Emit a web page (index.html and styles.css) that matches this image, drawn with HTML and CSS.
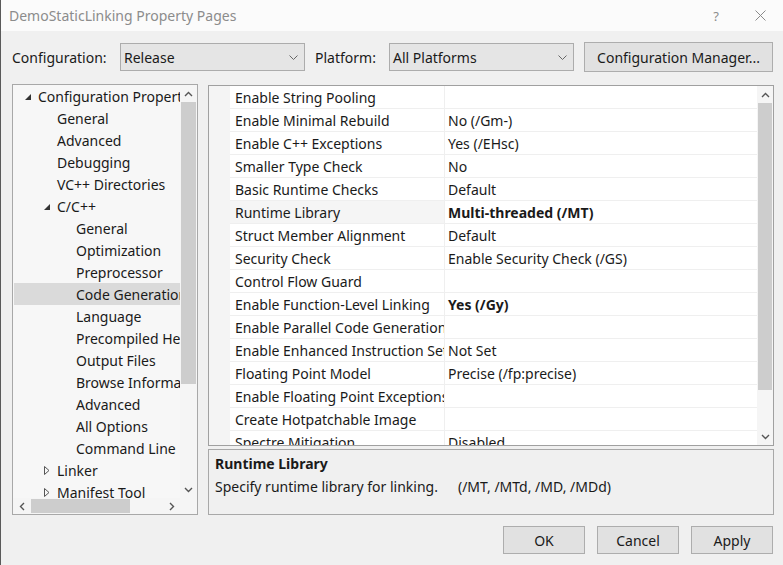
FILE: index.html
```html
<!DOCTYPE html>
<html>
<head>
<meta charset="utf-8">
<link rel="stylesheet" href="styles.css">
</head>
<body>
<div class="window">
  <div class="titlebar">
    <span class="title">DemoStaticLinking Property Pages</span>
    <span class="help">?</span>
    <span class="close"><svg width="11" height="11" viewBox="0 0 11 11"><path d="M0.5 0.5 L10.5 10.5 M10.5 0.5 L0.5 10.5" stroke="#8a8a8a" stroke-width="1" fill="none"/></svg></span>
  </div>

  <div class="toolbar">
    <span class="lbl lbl-config">Configuration:</span>
    <div class="combo"><span>Release</span><svg width="9" height="5" viewBox="0 0 9 5"><path d="M0.5 0.5 L4.5 4.5 L8.5 0.5" fill="none" stroke="#666"/></svg></div>
    <span class="lbl lbl-platform">Platform:</span>
    <div class="combo"><span>All Platforms</span><svg width="9" height="5" viewBox="0 0 9 5"><path d="M0.5 0.5 L4.5 4.5 L8.5 0.5" fill="none" stroke="#666"/></svg></div>
    <button class="btn btn-mgr">Configuration Manager...</button>
  </div>

  <div class="main">
    <div class="tree">
      <div class="tree-content">
        <div class="ti l1"><svg class="exp" width="6" height="6" viewBox="0 0 6 6"><path d="M6 0 L6 6 L0 6 Z" fill="#333"/></svg>Configuration Properties</div>
        <div class="ti l2">General</div>
        <div class="ti l2">Advanced</div>
        <div class="ti l2">Debugging</div>
        <div class="ti l2">VC++ Directories</div>
        <div class="ti l2"><svg class="exp" width="6" height="6" viewBox="0 0 6 6"><path d="M6 0 L6 6 L0 6 Z" fill="#333"/></svg>C/C++</div>
        <div class="ti l3">General</div>
        <div class="ti l3">Optimization</div>
        <div class="ti l3">Preprocessor</div>
        <div class="ti l3 sel">Code Generation</div>
        <div class="ti l3">Language</div>
        <div class="ti l3">Precompiled Headers</div>
        <div class="ti l3">Output Files</div>
        <div class="ti l3">Browse Information</div>
        <div class="ti l3">Advanced</div>
        <div class="ti l3">All Options</div>
        <div class="ti l3">Command Line</div>
        <div class="ti l2"><svg class="col" width="6" height="9" viewBox="0 0 6 9"><path d="M0.5 0.5 L5 4.5 L0.5 8.5 Z" fill="none" stroke="#555"/></svg>Linker</div>
        <div class="ti l2"><svg class="col" width="6" height="9" viewBox="0 0 6 9"><path d="M0.5 0.5 L5 4.5 L0.5 8.5 Z" fill="none" stroke="#555"/></svg>Manifest Tool</div>
      </div>
      <div class="vscroll tree-v">
        <div class="arrow"><svg width="9" height="6" viewBox="0 0 9 6"><path d="M1 5 L4.5 1.5 L8 5" fill="none" stroke="#555" stroke-width="1.4"/></svg></div>
        <div class="track"><div class="thumb tree-vthumb"></div></div>
        <div class="arrow"><svg width="9" height="6" viewBox="0 0 9 6"><path d="M1 1 L4.5 4.5 L8 1" fill="none" stroke="#555" stroke-width="1.4"/></svg></div>
      </div>
      <div class="hscroll">
        <div class="harrow"><svg width="6" height="9" viewBox="0 0 6 9"><path d="M5 1 L1.5 4.5 L5 8" fill="none" stroke="#555" stroke-width="1.4"/></svg></div>
        <div class="htrack"><div class="hthumb"></div></div>
        <div class="harrow"><svg width="6" height="9" viewBox="0 0 6 9"><path d="M1 1 L4.5 4.5 L1 8" fill="none" stroke="#555" stroke-width="1.4"/></svg></div>
      </div>
      <div class="corner"></div>
    </div>

    <div class="right">
      <div class="grid">
        <div class="gutter"></div>
        <div class="rows">
          <div class="row"><div class="nm">Enable String Pooling</div><div class="vl"></div></div>
          <div class="row"><div class="nm">Enable Minimal Rebuild</div><div class="vl">No (/Gm-)</div></div>
          <div class="row"><div class="nm">Enable C++ Exceptions</div><div class="vl">Yes (/EHsc)</div></div>
          <div class="row"><div class="nm">Smaller Type Check</div><div class="vl">No</div></div>
          <div class="row"><div class="nm">Basic Runtime Checks</div><div class="vl">Default</div></div>
          <div class="row hl"><div class="nm">Runtime Library</div><div class="vl b">Multi-threaded (/MT)</div></div>
          <div class="row"><div class="nm">Struct Member Alignment</div><div class="vl">Default</div></div>
          <div class="row"><div class="nm">Security Check</div><div class="vl">Enable Security Check (/GS)</div></div>
          <div class="row"><div class="nm">Control Flow Guard</div><div class="vl"></div></div>
          <div class="row"><div class="nm">Enable Function-Level Linking</div><div class="vl b">Yes (/Gy)</div></div>
          <div class="row"><div class="nm">Enable Parallel Code Generation</div><div class="vl"></div></div>
          <div class="row"><div class="nm">Enable Enhanced Instruction Set</div><div class="vl">Not Set</div></div>
          <div class="row"><div class="nm">Floating Point Model</div><div class="vl">Precise (/fp:precise)</div></div>
          <div class="row"><div class="nm">Enable Floating Point Exceptions</div><div class="vl"></div></div>
          <div class="row"><div class="nm">Create Hotpatchable Image</div><div class="vl"></div></div>
          <div class="row"><div class="nm">Spectre Mitigation</div><div class="vl">Disabled</div></div>
        </div>
        <div class="vscroll grid-v">
          <div class="arrow"><svg width="9" height="6" viewBox="0 0 9 6"><path d="M1 5 L4.5 1.5 L8 5" fill="none" stroke="#555" stroke-width="1.4"/></svg></div>
          <div class="track"><div class="thumb grid-vthumb"></div></div>
          <div class="arrow"><svg width="9" height="6" viewBox="0 0 9 6"><path d="M1 1 L4.5 4.5 L8 1" fill="none" stroke="#555" stroke-width="1.4"/></svg></div>
        </div>
      </div>
      <div class="desc">
        <div class="desc-title">Runtime Library</div>
        <div class="desc-text"><span>Specify runtime library for linking.</span><span class="desc-opts">(/MT, /MTd, /MD, /MDd)</span></div>
      </div>
    </div>
  </div>

  <div class="footer">
    <button class="btn btn-foot">OK</button>
    <button class="btn btn-foot">Cancel</button>
    <button class="btn btn-foot">Apply</button>
  </div>
</div>
</body>
</html>
```

FILE: styles.css
```css
* { box-sizing: border-box; }
html, body { margin: 0; padding: 0; }
body {
  width: 783px;
  height: 565px;
  overflow: hidden;
  font-family: "Noto Sans", "Open Sans", sans-serif;
  font-size: 14px;
  color: #1a1a1a;
  background: #f0f0f0;
}
.window {
  width: 783px;
  height: 565px;
  display: flex;
  flex-direction: column;
  background: #f0f0f0;
  border-left: 1px solid #5a5a5a;
}
.titlebar {
  height: 31px;
  background: #fbfbfb;
  display: flex;
  align-items: center;
  padding-left: 8px;
  flex: none;
}
.title {
  color: #8c8c8c;
  font-size: 14px;
  flex: 1;
}
.help {
  color: #8c8c8c;
  font-size: 13px;
  margin-right: 36px;
}
.close {
  display: flex;
  margin-right: 17px;
}
.toolbar {
  display: flex;
  align-items: center;
  height: 30px;
  margin-top: 11px;
  padding-left: 11px;
  flex: none;
}
.lbl { white-space: nowrap; }
.lbl-config { width: 108px; }
.lbl-platform { width: 74px; margin-left: 10px; }
.combo {
  width: 185px;
  height: 28px;
  background: #e5e5e5;
  border: 1px solid #acacac;
  display: flex;
  align-items: center;
  justify-content: space-between;
  padding: 0 6px 0 3px;
}
.btn {
  font-family: inherit;
  font-size: 14px;
  color: #1a1a1a;
  background: #e1e1e1;
  border: 1px solid #adadad;
  padding: 0;
  margin: 0;
}
.btn-mgr {
  width: 189px;
  height: 30px;
  margin-left: 10px;
}
.main {
  display: flex;
  height: 431px;
  margin-top: 12px;
  padding-left: 11px;
  flex: none;
}
.tree {
  width: 186px;
  height: 431px;
  border: 1px solid #a8a8a8;
  background: #f7f7f7;
  display: grid;
  grid-template-columns: 1fr 17px;
  grid-template-rows: 1fr 16px;
  overflow: hidden;
}
.tree-content {
  overflow: hidden;
  padding: 0 0 0 1px;
}
.ti {
  height: 22px;
  display: flex;
  align-items: center;
  white-space: nowrap;
  position: relative;
}
.ti.l1 { padding-left: 24px; }
.ti.l2 { padding-left: 43px; }
.ti.l3 { padding-left: 62px; }
.ti.sel { background: #dadada; }
.ti svg {
  position: absolute;
}
.ti.l1 svg.exp { left: 11px; top: 9px; }
.ti.l2 svg.exp { left: 30px; top: 9px; }
.ti.l2 svg.col { left: 30px; top: 7px; }
.vscroll {
  display: flex;
  flex-direction: column;
  background: #f5f5f5;
}
.arrow {
  height: 17px;
  display: flex;
  align-items: center;
  justify-content: center;
  flex: none;
}
.track {
  flex: 1;
  position: relative;
}
.thumb {
  position: absolute;
  left: 1px;
  right: 1px;
  background: #cdcdcd;
}
.tree-vthumb { top: 0; height: 282px; }
.grid-vthumb { top: 0; height: 287px; }
.hscroll {
  display: flex;
  background: #f5f5f5;
}
.harrow {
  width: 17px;
  display: flex;
  align-items: center;
  justify-content: center;
  flex: none;
}
.htrack {
  flex: 1;
  position: relative;
}
.hthumb {
  position: absolute;
  left: 1px;
  width: 99px;
  top: 1px;
  bottom: 1px;
  background: #cdcdcd;
}
.corner { background: #f5f5f5; }
.right {
  width: 566px;
  margin-left: 10px;
  padding-top: 1px;
  display: flex;
  flex-direction: column;
  gap: 3px;
}
.grid {
  height: 361px;
  border: 1px solid #a0a0a0;
  background: #fff;
  display: flex;
  overflow: hidden;
}
.gutter {
  width: 21px;
  background: #f4f4f4;
  flex: none;
}
.rows {
  flex: 1;
  overflow: hidden;
}
.row {
  display: flex;
  height: 23px;
  border-bottom: 1px solid #efefef;
}
.nm {
  width: 215px;
  flex: none;
  padding-left: 5px;
  padding-top: 1px;
  border-right: 1px solid #efefef;
  white-space: nowrap;
  overflow: hidden;
  line-height: 22px;
}
.vl {
  flex: 1;
  padding-left: 3px;
  padding-top: 1px;
  white-space: nowrap;
  line-height: 22px;
}
.vl.b { font-weight: bold; }
.row.hl .nm { background: #f5f5f5; }
.grid-v { width: 16px; flex: none; }
.desc {
  height: 66px;
  border: 1px solid #a8a8a8;
  padding: 2px 0 0 6px;
}
.desc-title {
  font-weight: bold;
  line-height: 23px;
}
.desc-text {
  line-height: 23px;
  display: flex;
}
.desc-opts { margin-left: 20px; }
.footer {
  display: flex;
  justify-content: flex-end;
  gap: 12px;
  margin-top: 11px;
  padding-right: 10px;
}
.btn-foot {
  width: 82px;
  height: 28px;
}
```
